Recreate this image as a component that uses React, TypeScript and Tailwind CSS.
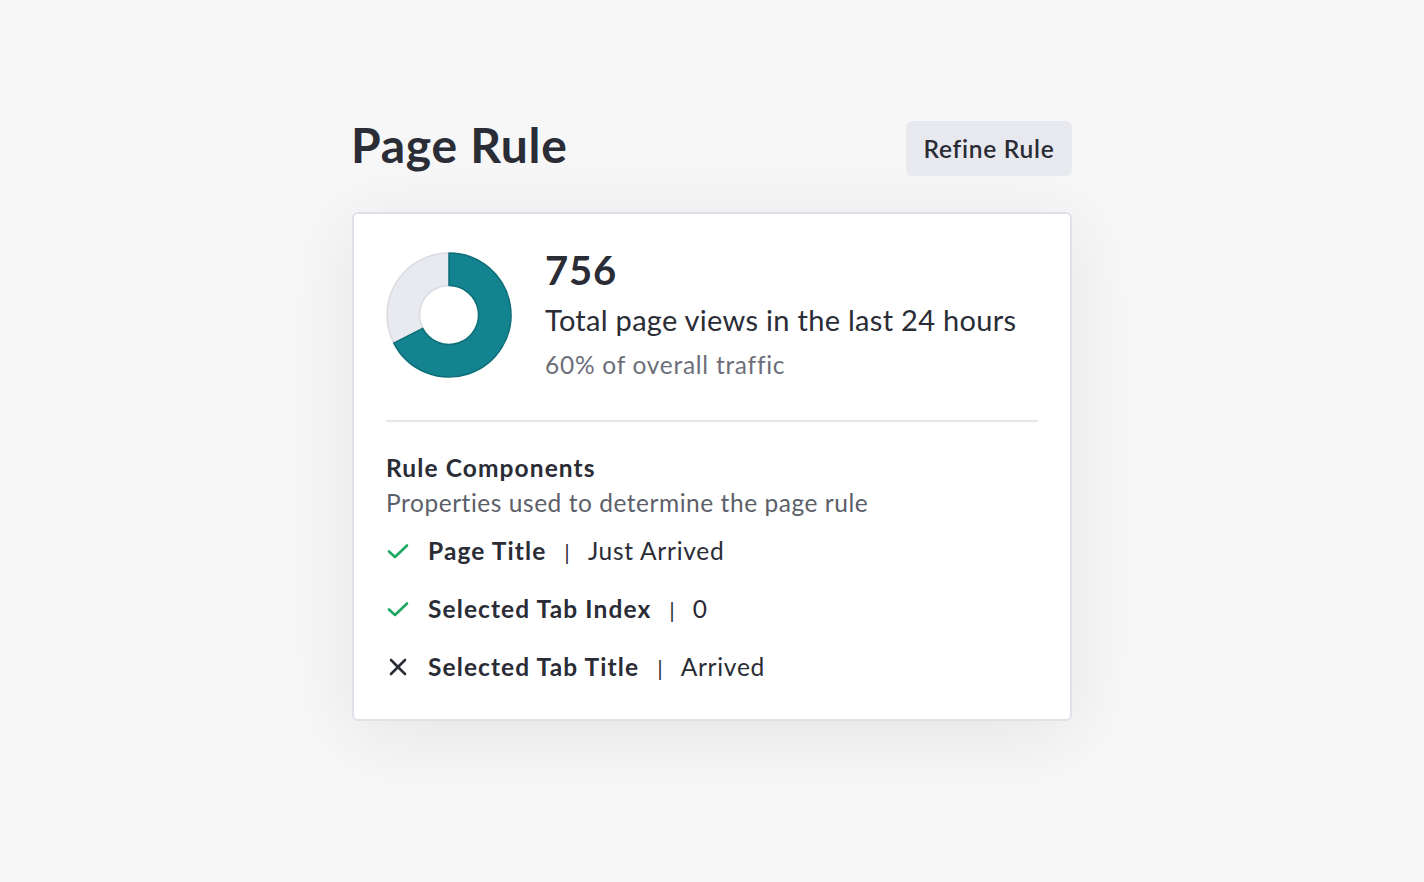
import React from "react";

function Donut() {
  const cx = 64, cy = 64, R = 62, r = 29.5;
  const endDeg = 243;
  const a = (endDeg - 90) * Math.PI / 180;
  const ox = cx + R * Math.cos(a), oy = cy + R * Math.sin(a);
  const ix = cx + r * Math.cos(a), iy = cy + r * Math.sin(a);
  const teal = `M ${cx} ${cy - R} A ${R} ${R} 0 1 1 ${ox} ${oy} L ${ix} ${iy} A ${r} ${r} 0 1 0 ${cx} ${cy - r} Z`;
  const gray = `M ${ox} ${oy} A ${R} ${R} 0 0 1 ${cx} ${cy - R} L ${cx} ${cy - r} A ${r} ${r} 0 0 0 ${ix} ${iy} Z`;
  return (
    <svg width="128" height="128" viewBox="0 0 128 128" className="shrink-0 -ml-[1px] -mt-[1px]">
      <path d={gray} fill="#e9eaf0" stroke="#d9dbe3" strokeWidth="1.5" strokeLinejoin="round" />
      <path d={teal} fill="#13838f" stroke="#0e6e78" strokeWidth="1.5" strokeLinejoin="round" />
    </svg>
  );
}

function Check() {
  return (
    <svg width="24" height="24" viewBox="0 0 24 24" className="shrink-0">
      <path d="M3 12.5 L9 18 L21 6.5" fill="none" stroke="#1ea763" strokeWidth="2.6" strokeLinecap="round" strokeLinejoin="round" />
    </svg>
  );
}

function Cross() {
  return (
    <svg width="24" height="24" viewBox="0 0 24 24" className="shrink-0">
      <path d="M5 5 L19 19 M19 5 L5 19" fill="none" stroke="#2a2c36" strokeWidth="2.6" strokeLinecap="round" />
    </svg>
  );
}

function Row({ ok, label, value }: { ok: boolean; label: string; value: string }) {
  return (
    <div className="flex items-center h-[58px]">
      <div className="w-[42px] flex items-center">{ok ? <Check /> : <Cross />}</div>
      <span className="font-bold text-[24.5px] tracking-[0.045em] text-[#2a2c36]">{label}</span>
      <span className="mx-[18px] text-[22px] text-[#2a2c36]">|</span>
      <span className="text-[24.5px] tracking-[0.03em] text-[#2a2c36]">{value}</span>
    </div>
  );
}

export default function App() {
  return (
    <div
      className="w-[1424px] h-[882px] bg-[#f7f7f8] flex justify-center"
      style={{ fontFamily: "Lato, 'Open Sans', sans-serif" }}
    >
      <div className="w-[720px] mt-[121px]">
        <div className="flex items-center justify-between h-[55px]">
          <h1 className="text-[48px] font-bold tracking-[0.015em] text-[#2a2c36] leading-none -mt-[8px] -ml-[1px]">Page Rule</h1>
          <button className="h-[55px] w-[166px] rounded-[6px] bg-[#e8e9ee] text-[24.5px] font-semibold tracking-[0.03em] text-[#2a2c36] pt-[2px]">
            Refine Rule
          </button>
        </div>
        <div className="mt-[36px] bg-white border-2 border-[#dfe1ea] rounded-[6px] px-[32px] pt-[38px] pb-[23px] shadow-[0_12px_80px_rgba(0,0,0,0.08)]">
          <div className="flex">
            <Donut />
            <div className="ml-[32px] flex flex-col">
              <div className="text-[40px] font-bold tracking-[0.02em] text-[#2a2c36] leading-[40px] -mt-[2px]">756</div>
              <div className="text-[29px] tracking-[0.01em] text-[#2a2c36] leading-[36px] mt-[12px]">Total page views in the last 24 hours</div>
              <div className="text-[24.5px] tracking-[0.03em] text-[#6c6f7a] leading-[30px] mt-[12px]">60% of overall traffic</div>
            </div>
          </div>
          <div className="mt-[40px] h-[2px] bg-[#e6e7eb]" />
          <div className="mt-[31px] text-[24.5px] font-bold tracking-[0.045em] text-[#2a2c36] leading-[30px]">Rule Components</div>
          <div className="mt-[5px] text-[24.5px] tracking-[0.022em] text-[#5c5f6a] leading-[30px]">Properties used to determine the page rule</div>
          <div className="mt-[4px]">
            <Row ok label="Page Title" value="Just Arrived" />
            <Row ok label="Selected Tab Index" value="0" />
            <Row ok={false} label="Selected Tab Title" value="Arrived" />
          </div>
        </div>
      </div>
    </div>
  );
}
